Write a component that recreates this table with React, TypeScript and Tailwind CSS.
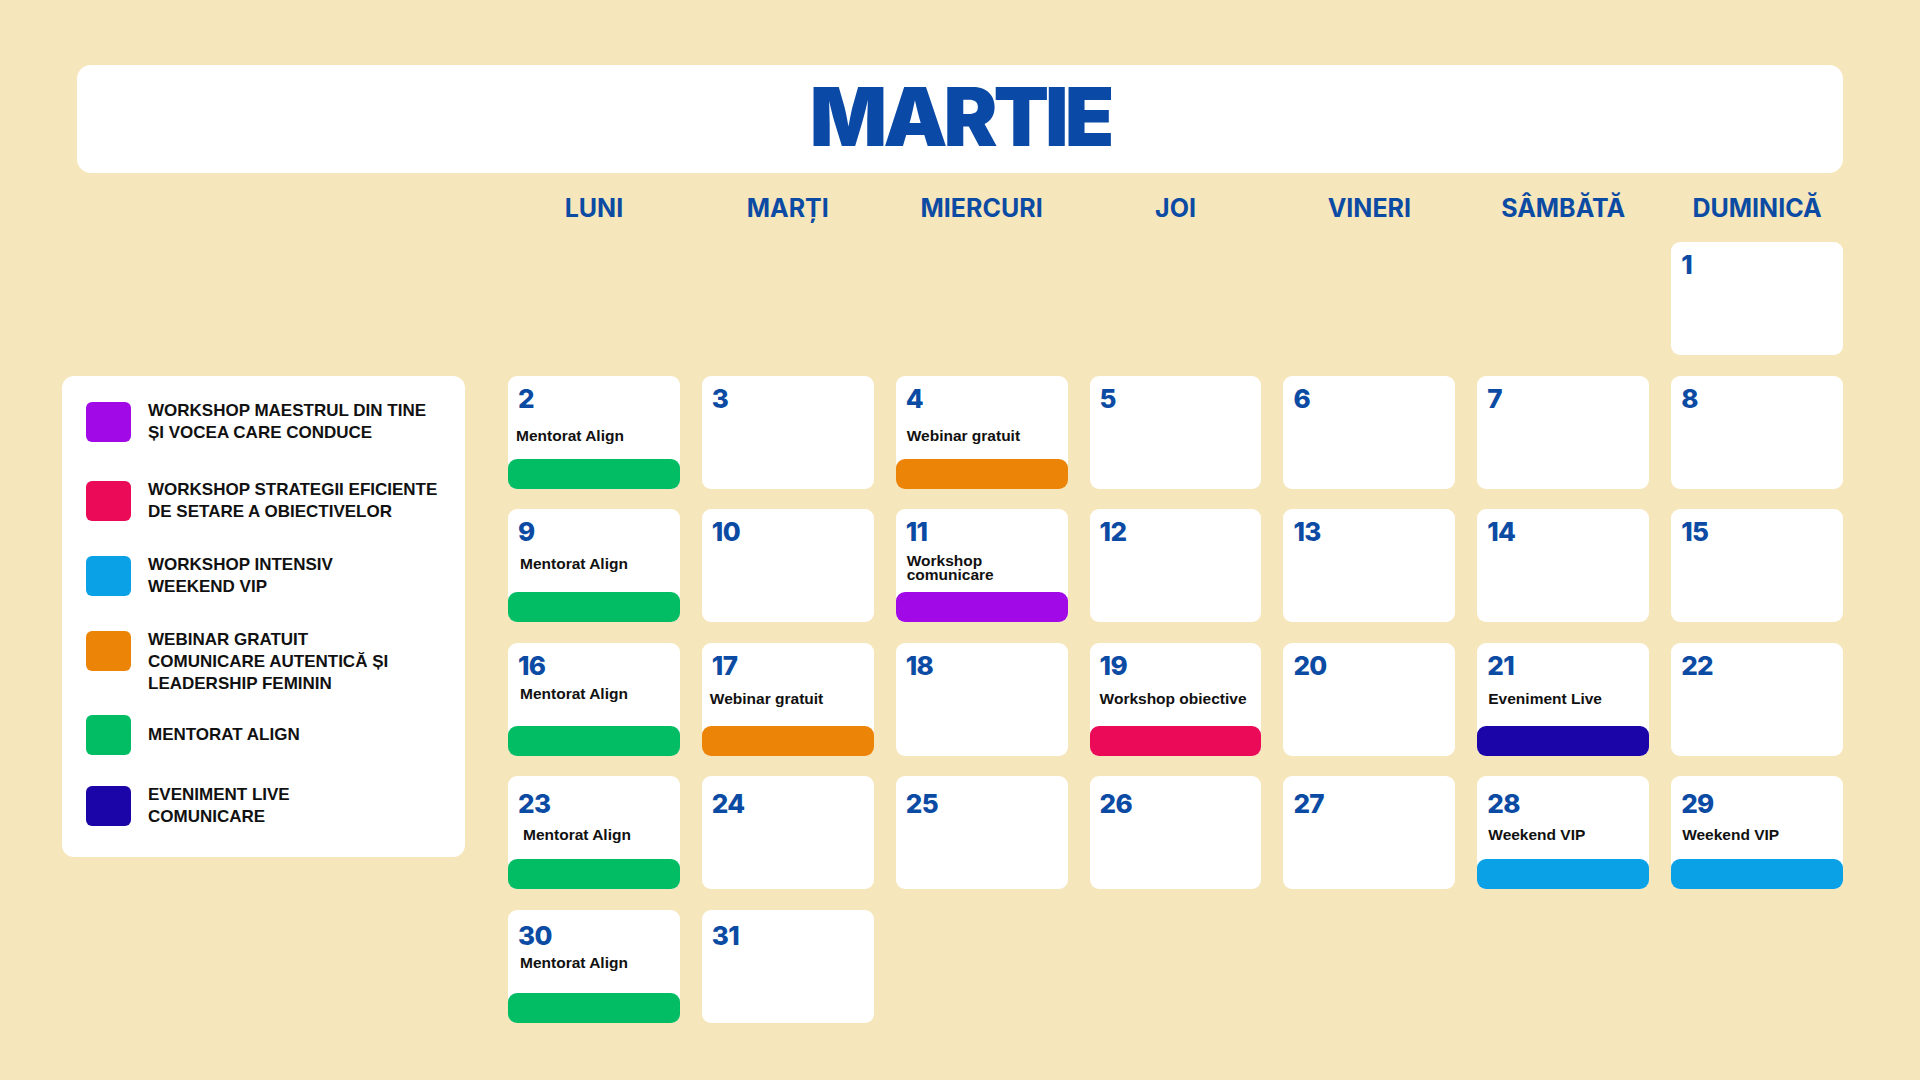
import React from 'react';

type CalEvent = {
  label: string[];
  bar: string;
  mt: string;
  pl: string;
  leading: string;
};

const GREEN = 'bg-[#03bd64]';
const ORANGE = 'bg-[#ec8507]';
const PURPLE = 'bg-[#a10ae6]';
const PINK = 'bg-[#ea0a58]';
const SKY = 'bg-[#0aa1e6]';
const NAVY = 'bg-[#1c05a8]';

const EVENTS: Record<number, CalEvent> = {
  2: { label: ['Mentorat Align'], bar: GREEN, mt: 'mt-[15px]', pl: 'pl-[8px]', leading: 'leading-[18px]' },
  4: { label: ['Webinar gratuit'], bar: ORANGE, mt: 'mt-[15px]', pl: 'pl-[11px]', leading: 'leading-[18px]' },
  9: { label: ['Mentorat Align'], bar: GREEN, mt: 'mt-[10px]', pl: 'pl-[12px]', leading: 'leading-[18px]' },
  11: { label: ['Workshop', 'comunicare'], bar: PURPLE, mt: 'mt-[9px]', pl: 'pl-[11px]', leading: 'leading-[14px]' },
  16: { label: ['Mentorat Align'], bar: GREEN, mt: 'mt-[6px]', pl: 'pl-[12px]', leading: 'leading-[18px]' },
  17: { label: ['Webinar gratuit'], bar: ORANGE, mt: 'mt-[11px]', pl: 'pl-[8px]', leading: 'leading-[18px]' },
  19: { label: ['Workshop obiective'], bar: PINK, mt: 'mt-[11px]', pl: 'pl-[10px]', leading: 'leading-[18px]' },
  21: { label: ['Eveniment Live'], bar: NAVY, mt: 'mt-[11px]', pl: 'pl-[11px]', leading: 'leading-[18px]' },
  23: { label: ['Mentorat Align'], bar: GREEN, mt: 'mt-[9px]', pl: 'pl-[15px]', leading: 'leading-[18px]' },
  28: { label: ['Weekend VIP'], bar: SKY, mt: 'mt-[9px]', pl: 'pl-[11px]', leading: 'leading-[18px]' },
  29: { label: ['Weekend VIP'], bar: SKY, mt: 'mt-[9px]', pl: 'pl-[11px]', leading: 'leading-[18px]' },
  30: { label: ['Mentorat Align'], bar: GREEN, mt: 'mt-[5px]', pl: 'pl-[12px]', leading: 'leading-[18px]' },
};

const WEEKS: (number | null)[][] = [
  [null, null, null, null, null, null, 1],
  [2, 3, 4, 5, 6, 7, 8],
  [9, 10, 11, 12, 13, 14, 15],
  [16, 17, 18, 19, 20, 21, 22],
  [23, 24, 25, 26, 27, 28, 29],
  [30, 31, null, null, null, null, null],
];

// number offset differs a little per week in the original
const WEEK_PT = ['pt-[10px]', 'pt-[10px]', 'pt-[10px]', 'pt-[10px]', 'pt-[15px]', 'pt-[13px]'];

const DAYS = ['LUNI', 'MARȚI', 'MIERCURI', 'JOI', 'VINERI', 'SÂMBĂTĂ', 'DUMINICĂ'];

const LEGEND = [
  { color: PURPLE, lines: ['WORKSHOP MAESTRUL DIN TINE', 'ȘI VOCEA CARE CONDUCE'], row: 'items-center mt-0', sw: '' },
  { color: PINK, lines: ['WORKSHOP STRATEGII EFICIENTE', 'DE SETARE A OBIECTIVELOR'], row: 'items-center mt-[35px]', sw: '' },
  { color: SKY, lines: ['WORKSHOP INTENSIV', 'WEEKEND VIP'], row: 'items-center mt-[31px]', sw: '' },
  { color: ORANGE, lines: ['WEBINAR GRATUIT', 'COMUNICARE AUTENTICĂ ȘI', 'LEADERSHIP FEMININ'], row: 'items-start mt-[31px]', sw: 'mt-[2px]' },
  { color: GREEN, lines: ['MENTORAT ALIGN'], row: 'items-center mt-[20px]', sw: '' },
  { color: NAVY, lines: ['EVENIMENT LIVE', 'COMUNICARE'], row: 'items-center mt-[29px]', sw: '' },
];

const Legend: React.FC = () => (
  <div className="bg-white rounded-[12px] pt-[24px] pb-[29px] pl-[24px]">
    {LEGEND.map((item, i) => (
      <div key={i} className={`flex gap-[17px] ${item.row}`}>
        <div className={`w-[45px] h-[40px] shrink-0 rounded-[6px] ${item.color} ${item.sw}`} />
        <div className="font-['Liberation_Sans',Arial,sans-serif] font-bold text-[17px] leading-[22px] text-[#111111]">
          {item.lines.map((l) => (
            <div key={l}>{l}</div>
          ))}
        </div>
      </div>
    ))}
  </div>
);

const DayCell: React.FC<{ day: number; pt: string }> = ({ day, pt }) => {
  const ev = EVENTS[day];
  return (
    <div className="h-[113px] bg-white rounded-[9px] flex flex-col">
      <div className={`${pt} pl-[10px] font-['Inter',sans-serif] font-extrabold text-[26px] leading-none tracking-tight text-[#0c4ba3]`}>
        {day}
      </div>
      {ev && (
        <div className={`${ev.mt} ${ev.pl} ${ev.leading} font-['Liberation_Sans',Arial,sans-serif] font-bold text-[15.5px] text-[#111111]`}>
          {ev.label.map((l) => (
            <div key={l}>{l}</div>
          ))}
        </div>
      )}
      {ev && <div className={`mt-auto h-[30px] rounded-[9px] ${ev.bar}`} />}
    </div>
  );
};

const App: React.FC = () => {
  return (
    <div className="w-[1920px] h-[1080px] overflow-hidden bg-[#f6e6bc] pt-[65px] pl-[62px] pr-[77px]">
      {/* Month title */}
      <div className="ml-[15px] h-[108px] bg-white rounded-[14px] flex items-center justify-center pb-1">
        <h1 className="font-['Inter',sans-serif] font-black text-[81px] leading-none tracking-[-0.05em] text-[#0a4aa6]">
          MARTIE
        </h1>
      </div>

      <div className="flex">
        {/* Legend */}
        <div className="w-[403px] shrink-0 pt-[203px]">
          <Legend />
        </div>

        {/* Calendar */}
        <div className="ml-[43px] flex-1">
          <div className="grid grid-cols-7 gap-x-[22px] h-[69px] items-center pt-[2px]">
            {DAYS.map((d) => (
              <div key={d} className="text-center font-['Inter',sans-serif] font-bold text-[25px] leading-none text-[#0c4ba3]">
                {d}
              </div>
            ))}
          </div>
          <div className="grid grid-cols-7 gap-x-[22px] gap-y-[20.6px]">
            {WEEKS.map((week, w) =>
              week.map((day, i) =>
                day === null ? (
                  <div key={`e-${w}-${i}`} className="h-[113px]" />
                ) : (
                  <DayCell key={day} day={day} pt={WEEK_PT[w]} />
                )
              )
            )}
          </div>
        </div>
      </div>
    </div>
  );
};

export default App;
